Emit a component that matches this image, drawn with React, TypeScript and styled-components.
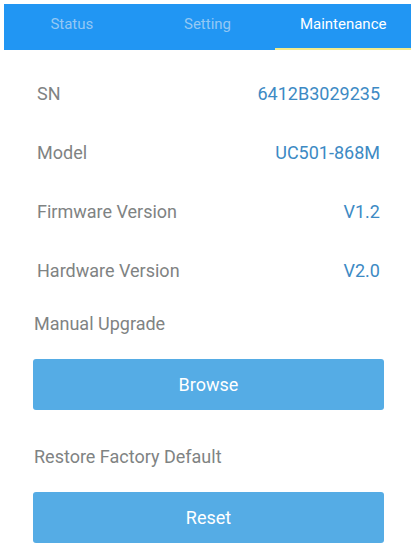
import React from 'react';
import styled, { createGlobalStyle } from 'styled-components';

const GlobalStyle = createGlobalStyle`
  html, body {
    margin: 0;
    padding: 0;
    background: #ffffff;
    font-family: Roboto, "Noto Sans", Arial, sans-serif;
  }
`;

const tabs = ['Status', 'Setting', 'Maintenance'];

const info = [
  { label: 'SN', value: '6412B3029235' },
  { label: 'Model', value: 'UC501-868M' },
  { label: 'Firmware Version', value: 'V1.2' },
  { label: 'Hardware Version', value: 'V2.0' },
];

export default function App() {
  return (
    <Page>
      <GlobalStyle />
      <TabBar>
        {tabs.map((t) => (
          <Tab key={t} $active={t === 'Maintenance'}>
            {t}
          </Tab>
        ))}
      </TabBar>
      <InfoList>
        {info.map((row) => (
          <InfoRow key={row.label}>
            <Label>{row.label}</Label>
            <Value>{row.value}</Value>
          </InfoRow>
        ))}
      </InfoList>
      <Section>
        <SectionTitle>Manual Upgrade</SectionTitle>
        <ActionButton>Browse</ActionButton>
      </Section>
      <Section>
        <SectionTitle>Restore Factory Default</SectionTitle>
        <ActionButton>Reset</ActionButton>
      </Section>
    </Page>
  );
}

const Page = styled.div`
  width: 416px;
  height: 550px;
  overflow: hidden;
  display: flex;
  flex-direction: column;
`;

const TabBar = styled.nav`
  display: flex;
  margin: 4px 5px 0 4px;
  height: 46px;
  background: #2196f3;
`;

const Tab = styled.div<{ $active: boolean }>`
  flex: 1;
  display: flex;
  align-items: center;
  justify-content: center;
  font-size: 15px;
  padding-bottom: 4px;
  box-sizing: border-box;
  color: ${({ $active }) => ($active ? '#ffffff' : '#94c8f3')};
  border-bottom: 2px solid ${({ $active }) => ($active ? '#f3ea8a' : 'transparent')};
`;

const InfoList = styled.div`
  display: flex;
  flex-direction: column;
  margin-top: 14px;
`;

const InfoRow = styled.div`
  display: flex;
  align-items: center;
  justify-content: space-between;
  height: 59px;
  padding: 0 36px 0 37px;
  font-size: 18px;
`;

const Label = styled.span`
  color: #7f8383;
`;

const Value = styled.span`
  color: #3d8ac4;
`;

const Section = styled.section`
  display: flex;
  flex-direction: column;
  padding: 0 32px 0 33px;
  margin-top: 12px;

  & + & {
    margin-top: 35px;
  }
`;

const SectionTitle = styled.div`
  color: #7f8383;
  font-size: 18px;
  line-height: 24px;
  padding-left: 1px;
  margin-bottom: 23px;
`;

const ActionButton = styled.button`
  height: 51px;
  border: none;
  border-radius: 3px;
  background: #55ace5;
  color: #ffffff;
  font-family: inherit;
  font-size: 18px;
`;
